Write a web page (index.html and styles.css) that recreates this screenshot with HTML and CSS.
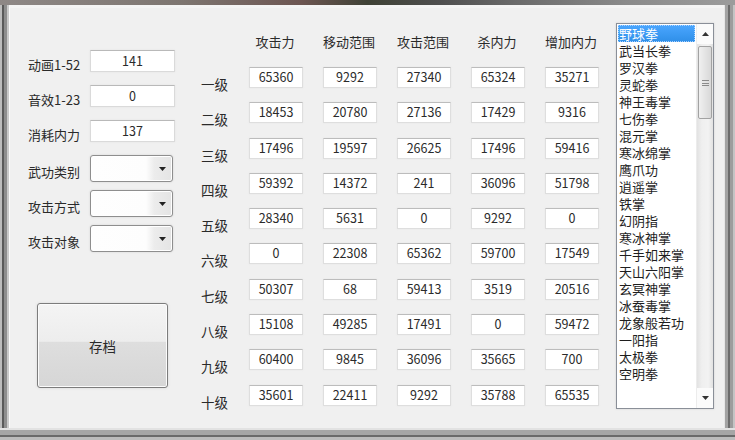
FILE: index.html
```html
<!DOCTYPE html>
<html lang="zh-CN">
<head>
<meta charset="utf-8">
<title>武功编辑</title>
<link rel="stylesheet" href="styles.css">
</head>
<body>
<div class="screen">
  <div class="topstrip"></div>
  <div class="frame">
    <div class="client">
      <div class="left">
        <div class="field"><span class="lbl">动画1-52</span><div class="box">141</div></div>
        <div class="field"><span class="lbl">音效1-23</span><div class="box">0</div></div>
        <div class="field"><span class="lbl">消耗内力</span><div class="box">137</div></div>
        <div class="field combo-row"><span class="lbl">武功类别</span><div class="combo"><span class="drop"><svg width="7" height="4" viewBox="0 0 7 4"><path d="M0 0h7L3.5 4z" fill="#222"/></svg></span></div></div>
        <div class="field combo-row"><span class="lbl">攻击方式</span><div class="combo"><span class="drop"><svg width="7" height="4" viewBox="0 0 7 4"><path d="M0 0h7L3.5 4z" fill="#222"/></svg></span></div></div>
        <div class="field combo-row"><span class="lbl">攻击对象</span><div class="combo"><span class="drop"><svg width="7" height="4" viewBox="0 0 7 4"><path d="M0 0h7L3.5 4z" fill="#222"/></svg></span></div></div>
        <div class="btn">存档</div>
      </div>

      <div class="grid">
        <div></div>
        <div class="hdr">攻击力</div><div class="hdr">移动范围</div><div class="hdr">攻击范围</div><div class="hdr">杀内力</div><div class="hdr">增加内力</div>

        <div class="rl">一级</div><div class="cell">65360</div><div class="cell">9292</div><div class="cell">27340</div><div class="cell">65324</div><div class="cell">35271</div>
        <div class="rl">二级</div><div class="cell">18453</div><div class="cell">20780</div><div class="cell">27136</div><div class="cell">17429</div><div class="cell">9316</div>
        <div class="rl">三级</div><div class="cell">17496</div><div class="cell">19597</div><div class="cell">26625</div><div class="cell">17496</div><div class="cell">59416</div>
        <div class="rl">四级</div><div class="cell">59392</div><div class="cell">14372</div><div class="cell">241</div><div class="cell">36096</div><div class="cell">51798</div>
        <div class="rl">五级</div><div class="cell">28340</div><div class="cell">5631</div><div class="cell">0</div><div class="cell">9292</div><div class="cell">0</div>
        <div class="rl">六级</div><div class="cell">0</div><div class="cell">22308</div><div class="cell">65362</div><div class="cell">59700</div><div class="cell">17549</div>
        <div class="rl">七级</div><div class="cell">50307</div><div class="cell">68</div><div class="cell">59413</div><div class="cell">3519</div><div class="cell">20516</div>
        <div class="rl">八级</div><div class="cell">15108</div><div class="cell">49285</div><div class="cell">17491</div><div class="cell">0</div><div class="cell">59472</div>
        <div class="rl">九级</div><div class="cell">60400</div><div class="cell">9845</div><div class="cell">36096</div><div class="cell">35665</div><div class="cell">700</div>
        <div class="rl">十级</div><div class="cell">35601</div><div class="cell">22411</div><div class="cell">9292</div><div class="cell">35788</div><div class="cell">65535</div>
      </div>

      <div class="listbox">
        <div class="items">
          <div class="item sel">野球拳</div>
          <div class="item">武当长拳</div>
          <div class="item">罗汉拳</div>
          <div class="item">灵蛇拳</div>
          <div class="item">神王毒掌</div>
          <div class="item">七伤拳</div>
          <div class="item">混元掌</div>
          <div class="item">寒冰绵掌</div>
          <div class="item">鹰爪功</div>
          <div class="item">逍遥掌</div>
          <div class="item">铁掌</div>
          <div class="item">幻阴指</div>
          <div class="item">寒冰神掌</div>
          <div class="item">千手如来掌</div>
          <div class="item">天山六阳掌</div>
          <div class="item">玄冥神掌</div>
          <div class="item">冰蚕毒掌</div>
          <div class="item">龙象般若功</div>
          <div class="item">一阳指</div>
          <div class="item">太极拳</div>
          <div class="item">空明拳</div>
        </div>
        <div class="vscroll">
          <div class="sbtn"><svg width="7" height="4" viewBox="0 0 7 4"><path d="M0 4h7L3.5 0z" fill="#333"/></svg></div>
          <div class="thumb"><span class="grip"></span></div>
          <div class="track"></div>
          <div class="sbtn"><svg width="7" height="4" viewBox="0 0 7 4"><path d="M0 0h7L3.5 4z" fill="#333"/></svg></div>
        </div>
      </div>
    </div>
  </div>
</div>
</body>
</html>
```

FILE: styles.css
```css
* { box-sizing: border-box; }
html, body { margin: 0; padding: 0; }
body {
  font-family: "Noto Sans CJK SC", "Noto Sans", "DejaVu Sans", sans-serif;
  font-size: 13px;
  color: #2a2a2a;
  background: #a8a8a8;
}
.screen {
  width: 735px;
  height: 440px;
  display: flex;
  flex-direction: column;
  overflow: hidden;
}
.topstrip {
  flex: none;
  height: 5px;
  background: linear-gradient(90deg, #8e8886 0%, #7d7570 25%, #6d5652 41%, #3f4236 50%, #4f4f4f 60%, #6a6a6a 70%, #8a8a8a 85%, #9c9c9c 100%);
}
.frame {
  flex: 1;
  display: flex;
  padding: 0 11px 12px 9px;
  background:
    linear-gradient(180deg, #e2e2e2 0 2px, #a6a6a6 2px 7px, #6a6a6a 7px 9px, #bcbcbc 9px) left bottom / 100% 12px no-repeat,
    linear-gradient(90deg, #bdbdbd 0 2px, #5a5a5a 2px 4px, #8e8e8e 4px 7px, #cacaca 7px 9px, transparent 9px) left top / 100% 100% no-repeat,
    linear-gradient(90deg, #e6e6e6 0 1px, #a3a3a3 1px 4px, #6c6c6c 4px 6px, #9d9d9d 6px 9px, #c4c4c4 9px) right top / 11px 100% no-repeat,
    #a8a8a8;
}
.client {
  flex: 1;
  display: flex;
  align-items: flex-start;
  background: #f0f0f0;
  border-top: 3px solid #f4f4f4;
  border-left: 1px solid #fbfbfb;
}

/* left panel */
.left {
  flex: none;
  width: 165px;
  padding: 42px 0 0 18px;
  display: flex;
  flex-direction: column;
}
.field {
  display: flex;
  height: 35px;
  align-items: flex-start;
}
.lbl {
  width: 62px;
  line-height: 18px;
  padding-top: 6px;
  white-space: nowrap;
}
.combo-row .lbl { padding-top: 8px; }
.box {
  width: 85px;
  height: 22px;
  line-height: 19px;
  text-align: center;
  font-size: 12.5px;
  background: #fff;
  border: 1px solid #dadada;
  border-top-color: #b9b9b9;
  box-shadow: 0 0 2px #e4e4e4;
}
.combo {
  width: 83px;
  height: 27px;
  border: 1px solid #8e8e8e;
  border-radius: 3px;
  background: linear-gradient(90deg, #fefefe 0, #fdfdfd 68%, #ececec 78%, #e4e4e4 100%);
  box-shadow: inset 0 0 0 1px #fff, 0 0 2px #d0d0d0;
  display: flex;
  justify-content: flex-end;
  align-items: center;
}
.drop {
  width: 20px;
  display: flex;
  justify-content: center;
  align-items: center;
}
.btn {
  margin: 43px 0 0 9px;
  width: 131px;
  height: 85px;
  border: 1px solid #7c7c7c;
  border-radius: 3px;
  background: linear-gradient(180deg, #f4f4f4 0%, #ededed 45%, #dedede 46%, #d6d6d6 100%);
  box-shadow: inset 0 0 0 1px #fbfbfb, 0 0 3px #d8d8d8;
  display: flex;
  justify-content: center;
  align-items: center;
  font-size: 13.5px;
}

/* grid */
.grid {
  flex: none;
  margin-left: 26px;
  display: grid;
  grid-template-columns: 28px repeat(5, 54px);
  grid-template-rows: 59px repeat(10, 35.3px);
  column-gap: 20px;
}
.hdr {
  padding-top: 25px;
  line-height: 18px;
  text-align: center;
  white-space: nowrap;
  margin-left: -6px;
  margin-right: -4px;
}
.rl {
  padding-top: 8px;
  line-height: 18px;
  font-size: 13.5px;
  white-space: nowrap;
}
.cell {
  height: 21px;
  line-height: 18px;
  text-align: center;
  font-size: 12.5px;
  background: #fff;
  border: 1px solid #dedede;
  border-top-color: #bcbcbc;
  box-shadow: 0 0 2px #e6e6e6;
}

/* listbox */
.listbox {
  flex: none;
  margin: 15px 0 0 17px;
  width: 98px;
  height: 386px;
  display: flex;
  background: #fff;
  border: 1px solid #8a8f98;
  box-shadow: 0 0 2px #cfcfcf;
}
.items {
  flex: 1;
  padding: 1px 1px 0 1px;
  overflow: hidden;
}
.item {
  height: 17px;
  line-height: 17px;
  padding-left: 1px;
  white-space: nowrap;
  font-size: 13px;
  color: #1e1e1e;
}
.item.sel {
  background: linear-gradient(180deg, #4aa6ff, #2f8fe8);
  color: #fff;
  outline: 1px dotted #aad2ff;
  outline-offset: -1px;
}
.vscroll {
  flex: none;
  width: 17px;
  display: flex;
  flex-direction: column;
  background: linear-gradient(90deg, #e2e2e2 0, #efefef 30%, #f2f2f2 70%, #e2e2e2 100%);
  border-left: 1px solid #ececec;
}
.sbtn {
  flex: none;
  height: 20px;
  display: flex;
  justify-content: center;
  align-items: center;
  background: #fbfbfb;
}
.thumb {
  flex: none;
  height: 73px;
  margin: 2px 1px 0 1px;
  border: 1px solid #a2a2a2;
  border-radius: 2px;
  background: linear-gradient(90deg, #f0f0f0, #e4e4e4 50%, #d8d8d8);
  display: flex;
  justify-content: center;
  align-items: center;
}
.grip {
  width: 7px;
  height: 6px;
  border-top: 1px solid #8a8a8a;
  border-bottom: 1px solid #8a8a8a;
  background: linear-gradient(180deg, transparent 2px, #8a8a8a 2px 3px, transparent 3px);
}
.track {
  flex: 1;
}
```
